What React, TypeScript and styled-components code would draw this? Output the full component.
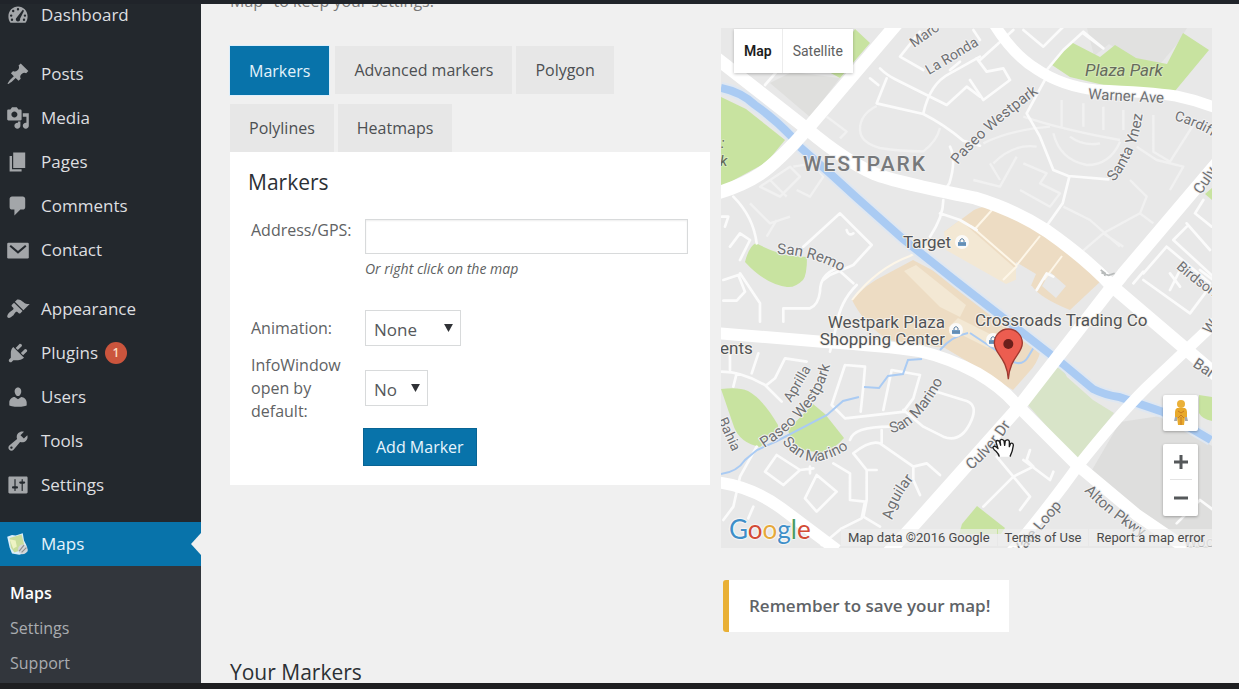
import React from "react";
import styled, { createGlobalStyle } from "styled-components";

const GlobalStyle = createGlobalStyle`
  *, *::before, *::after { box-sizing: border-box; }
  body {
    margin: 0;
    background: #f0f0f0;
    color: #444;
    font-family: "Open Sans", "Noto Sans", sans-serif;
    font-size: 16px;
  }
  button, input, select { font: inherit; color: inherit; margin: 0; }
`;

/* ---------- page frame ---------- */

const Shell = styled.div`
  display: grid;
  grid-template-rows: 4px minmax(0, 1fr) 6px;
  height: 100vh;
  overflow: hidden;
`;

const TopEdge = styled.div`
  background: #20242a;
`;

const BottomEdge = styled.div`
  background: #1e1f21;
`;

const Body = styled.div`
  display: grid;
  grid-template-columns: 201px minmax(0, 1fr);
  min-height: 0;
`;

/* ---------- sidebar ---------- */

const Sidebar = styled.nav`
  display: flex;
  flex-direction: column;
  background: #23282d;
  overflow: hidden;
`;

const MenuGroup = styled.ul`
  list-style: none;
  margin: 0 0 15px;
  padding: 0;
  &:first-child { margin-top: -11px; }
  &:nth-last-child(2) { margin-bottom: 0; }
`;

const MenuLink = styled.a<{ $current?: boolean }>`
  position: relative;
  display: flex;
  align-items: center;
  gap: 11px;
  height: 44px;
  padding-left: 6px;
  font-size: 17px;
  font-weight: 500;
  line-height: 24px;
  text-decoration: none;
  color: ${(p) => (p.$current ? "#e6f4fc" : "#dedfe0")};
  background: ${(p) => (p.$current ? "#0873aa" : "transparent")};
  &::after {
    content: ${(p) => (p.$current ? '""' : "none")};
    position: absolute;
    right: 0;
    top: 11px;
    border: 11px solid transparent;
    border-left-width: 0;
    border-right: 10px solid #f0f0f0;
  }
`;

const MenuIcon = styled.svg`
  flex: none;
  width: 24px;
  height: 24px;
  fill: #a3a6a9;
`;

const Count = styled.span`
  display: grid;
  place-items: center;
  width: 22px;
  height: 22px;
  margin-left: -4px;
  border-radius: 50%;
  background: #cb553d;
  color: #fbdcc0;
  font-size: 12px;
  font-weight: 600;
  line-height: 16px;
`;

const SubMenu = styled.ul`
  flex: 1;
  list-style: none;
  margin: 0;
  padding: 9px 0 0;
  background: #32363c;
`;

const SubLink = styled.a<{ $current?: boolean }>`
  display: flex;
  align-items: center;
  height: 35px;
  padding-left: 10px;
  font-size: 16px;
  font-weight: ${(p) => (p.$current ? 600 : 400)};
  text-decoration: none;
  color: ${(p) => (p.$current ? "#fff" : "#a9acb0")};
`;

/* ---------- main area ---------- */

const Main = styled.main`
  min-width: 0;
  padding: 0 27px 0 29px;
  overflow: hidden;
`;

const Columns = styled.div`
  display: grid;
  grid-template-columns: 480fr 491fr;
  column-gap: 11px;
  align-items: start;
`;

const Editor = styled.section`
  min-width: 0;
`;

const Note = styled.p`
  margin: -13px 0 35px;
  font-size: 16px;
  line-height: 20px;
  color: #777;
`;

const Tabs = styled.div`
  display: flex;
  flex-wrap: wrap;
  gap: 9px 4px;
`;

const Tab = styled.button<{ $active?: boolean }>`
  height: ${(p) => (p.$active ? "49px" : "48px")};
  margin-right: ${(p) => (p.$active ? "2px" : "0")};
  padding: 0 19px;
  border: 0;
  font-size: 16px;
  white-space: nowrap;
  font-weight: ${(p) => (p.$active ? 500 : 400)};
  color: ${(p) => (p.$active ? "#e3f2fb" : "#4c4f52")};
  background: ${(p) => (p.$active ? "#0873aa" : "#e7e7e7")};
  box-shadow: ${(p) => (p.$active ? "0 0 0 1px #dceffc" : "none")};
`;

const Panel = styled.div`
  padding: 14px 22px 19px 18px;
  background: #fff;
`;

const PanelTitle = styled.h2`
  margin: 0 0 21px;
  font-size: 21px;
  font-weight: 400;
  line-height: 32px;
  color: #2c3035;
`;

const Form = styled.form`
  display: grid;
  grid-template-columns: 112px minmax(0, 1fr);
  padding-left: 3px;
`;

const FieldLabel = styled.label<{ $inset?: number }>`
  grid-column: 1;
  padding-top: ${(p) => p.$inset ?? 0}px;
  padding-right: 14px;
  font-size: 16px;
  line-height: 23px;
  color: #606264;
`;

const FieldCell = styled.div<{ $height: number; $inset?: number }>`
  grid-column: 2;
  min-height: ${(p) => p.$height}px;
  padding-top: ${(p) => p.$inset ?? 0}px;
  padding-left: 2px;
`;

const ButtonRow = styled.div`
  grid-column: 2;
`;

const TextInput = styled.input`
  display: block;
  width: 100%;
  height: 35px;
  padding: 0 8px;
  border: 1px solid #d8dadb;
  background: #fff;
  box-shadow: inset 0 1px 2px rgba(0, 0, 0, 0.07);
`;

const Hint = styled.p`
  margin: 4px 0 0;
  font-size: 14px;
  font-style: italic;
  line-height: 21px;
  color: #5d5f61;
`;

const SelectBox = styled.span<{ $width: number }>`
  position: relative;
  display: block;
  width: ${(p) => p.$width}px;
  svg {
    position: absolute;
    right: 8px;
    top: 14px;
    width: 9px;
    height: 8px;
    fill: #303236;
    pointer-events: none;
  }
`;

const Select = styled.select`
  appearance: none;
  display: block;
  width: 100%;
  height: 36px;
  padding: 2px 8px 0;
  border: 1px solid #d8dadb;
  border-radius: 0;
  background: #fff;
  font-size: 17px;
  color: #55585b;
`;

const PrimaryButton = styled.button`
  height: 38px;
  padding: 0 12px;
  border: 1px solid #086494;
  background: #0873aa;
  color: #e8f5fd;
  font-size: 16px;
  font-weight: 500;
  white-space: nowrap;
`;

const SectionTitle = styled.h2`
  margin: 24px 0 0;
  font-size: 21px;
  font-weight: 400;
  line-height: 32px;
  color: #2c3035;
`;

/* ---------- map ---------- */

const MapColumn = styled.section`
  min-width: 0;
  padding-top: 24px;
`;

const MapFrame = styled.div`
  position: relative;
  aspect-ratio: 491 / 520;
  overflow: hidden;
  background: #e8e8e8;
  font-family: Roboto, sans-serif;
`;

const MapCanvas = styled.svg`
  display: block;
  width: 100%;
  height: 100%;
`;

const MapTypes = styled.div`
  position: absolute;
  top: 1px;
  left: 13px;
  display: flex;
  height: 44px;
  background: #fff;
  box-shadow: 0 1px 3px rgba(0, 0, 0, 0.25);
`;

const MapType = styled.button<{ $active?: boolean }>`
  padding: 0 10px;
  border: 0;
  background: #fff;
  font-size: 14px;
  line-height: 20px;
  font-weight: ${(p) => (p.$active ? 600 : 400)};
  color: ${(p) => (p.$active ? "#1c1c1c" : "#606060")};
  & + & { border-left: 1px solid #ececec; }
`;

const MapTools = styled.div`
  position: absolute;
  right: 14px;
  bottom: 32px;
  display: flex;
  flex-direction: column;
  gap: 13px;
  width: 35px;
`;

const ToolCard = styled.div`
  display: flex;
  flex-direction: column;
  align-items: center;
  background: #fff;
  border-radius: 2px;
  box-shadow: 0 1px 3px rgba(0, 0, 0, 0.3);
`;

const ToolButton = styled.button`
  display: grid;
  place-items: center;
  width: 100%;
  height: 36px;
  padding: 0;
  border: 0;
  background: transparent;
`;

const ToolRule = styled.hr`
  width: 22px;
  height: 1px;
  margin: -1px 0 0;
  border: 0;
  background: #e3e3e3;
`;

const Logo = styled.span`
  position: absolute;
  left: 8px;
  bottom: 1px;
  font-family: Lato, sans-serif;
  font-size: 26px;
  line-height: 36px;
  text-shadow: 0 0 2px #fff, 0 0 2px #fff, 0 0 2px #fff;
`;

const LogoLetter = styled.span<{ $tone: string }>`
  color: ${(p) => p.$tone};
`;

const Attribution = styled.div`
  position: absolute;
  right: 0;
  bottom: 2px;
  display: flex;
  gap: 1px;
`;

const Credit = styled.span`
  padding: 0 7px;
  background: rgba(240, 240, 240, 0.65);
  font-size: 13px;
  line-height: 17px;
  white-space: nowrap;
  color: #4a4a4a;
  a { color: inherit; text-decoration: none; }
`;

const Notice = styled.p`
  width: fit-content;
  margin: 32px 0 0 2px;
  padding: 14px 19px 14px 20px;
  border-left: 6px solid #e9b035;
  border-radius: 3px 0 0 3px;
  background: #fff;
  font-size: 17px;
  font-weight: 600;
  line-height: 24px;
  color: #606367;
`;

/* ---------- menu data ---------- */

const ICONS: Record<string, React.ReactNode> = {
  dashboard: (
    <path
      fillRule="evenodd"
      d="M3.76 16.5h12.48C17.34 15.13 18 13.2 18 11.2c0-4.6-3.58-8.2-8-8.2s-8 3.6-8 8.2c0 2 .66 3.93 1.76 5.3zM10 4.2a1 1 0 1 1 0 2 1 1 0 0 1 0-2zM6 5.7a1 1 0 1 1 0 2 1 1 0 0 1 0-2zM14 5.7l1 .8-3.3 6.7c.4 1.2-.5 2.3-1.7 2.3-1.3 0-2.2-1.3-1.7-2.5zM4.3 9.5a1 1 0 1 1 0 2 1 1 0 0 1 0-2zM15.800 9.5a1 1 0 1 1 0 2 1 1 0 0 1 0-2zM5 13a1 1 0 1 1 0 2 1 1 0 0 1 0-2zM15 13a1 1 0 1 1 0 2 1 1 0 0 1 0-2z"
    />
  ),
  posts: (
    <path d="M10.44 3.02l1.82-1.82 6.36 6.35-1.83 1.82c-1.05-.68-2.48-.57-3.41.36l-.75.75c-.92.93-1.04 2.35-.35 3.41l-1.83 1.82-2.41-2.41-2.8 2.79c-.42.42-3.38 2.71-3.8 2.29s1.86-3.39 2.28-3.81l2.79-2.79L4.1 9.36l1.83-1.82c1.05.69 2.48.57 3.4-.36l.75-.75c.93-.92 1.05-2.35.36-3.41z" />
  ),
  media: (
    <path d="M13 11V4c0-.55-.45-1-1-1h-1.67L9 1H5L3.67 3H2c-.55 0-1 .45-1 1v7c0 .55.45 1 1 1h10c.55 0 1-.45 1-1zM7 4.5c1.38 0 2.5 1.12 2.5 2.5S8.38 9.5 7 9.5 4.5 8.38 4.5 7 5.62 4.5 7 4.5zM14 6h5v10.5c0 1.38-1.12 2.5-2.5 2.5S14 17.88 14 16.5s1.12-2.5 2.5-2.5c.17 0 .34.02.5.05V9h-3V6zm-4 8.05V13h2v3.5c0 1.38-1.12 2.5-2.5 2.5S7 17.88 7 16.5 8.12 14 9.5 14c.17 0 .34.02.5.05z" />
  ),
  pages: <path d="M6 15V2h10v13H6zm-1 1h8v2H3V5h2v11z" />,
  comments: (
    <path d="M5 2h9c1.1 0 2 .9 2 2v7c0 1.1-.9 2-2 2h-2l-5 5v-5H5c-1.1 0-2-.9-2-2V4c0-1.1.9-2 2-2z" />
  ),
  contact: (
    <>
      <rect x="1" y="4" width="18" height="13" rx="1" />
      <path d="M3.5 6.500l6.500 5.500 6.500-5.500" fill="none" stroke="#23282d" strokeWidth="1.700" />
    </>
  ),
  appearance: (
    <path d="M14.48 11.06L7.41 3.99l1.5-1.5c.5-.56 2.3-.47 3.51.32 1.21.8 1.43 1.28 2.91 2.1 1.18.64 2.45 1.26 4.45.85zm-.71.71L6.7 4.7 4.93 6.47c-.39.39-.39 1.02 0 1.41l1.06 1.06c.39.39.39 1.03 0 1.42-.6.6-1.43 1.11-2.21 1.69-.35.26-.7.53-1.01.84C1.43 14.23.4 16.08 1.4 17.07c.99 1 2.84-.03 4.18-1.36.31-.31.58-.66.85-1.02.57-.78 1.08-1.61 1.69-2.21.39-.39 1.02-.39 1.41 0l1.06 1.06c.39.39 1.02.39 1.41 0z" />
  ),
  plugins: (
    <path d="M13.11 4.36L9.87 7.6 8 5.73l3.24-3.24c.35-.34 1.05-.2 1.56.32.52.51.66 1.21.31 1.55zm-8 1.77l.91-1.12 9.01 9.01-1.19.84c-.71.71-2.63 1.16-3.82 1.16H6.14L4.9 17.26c-.59.59-1.54.59-2.12 0-.59-.58-.59-1.53 0-2.12l1.24-1.24v-3.88c0-1.13.4-3.19 1.09-3.89zm7.26 3.97l3.24-3.24c.34-.35 1.04-.21 1.55.31.52.51.66 1.21.31 1.55l-3.24 3.25z" />
  ),
  users: (
    <path d="M10 9.25c-2.27 0-2.73-3.44-2.73-3.44C7 4.02 7.82 2 9.97 2c2.16 0 2.98 2.02 2.71 3.81 0 0-.41 3.44-2.68 3.44zm0 2.57L12.72 10c2.39 0 4.52 2.33 4.52 4.53v2.49s-3.65 1.13-7.24 1.13c-3.65 0-7.24-1.13-7.24-1.13v-2.49c0-2.25 1.94-4.48 4.47-4.48z" />
  ),
  tools: (
    <path d="M16.68 9.77c-1.34 1.34-3.3 1.67-4.95.99l-5.41 6.52c-.99.99-2.59.99-3.58 0s-.99-2.59 0-3.57l6.52-5.42c-.68-1.65-.35-3.61.99-4.95 1.28-1.28 3.12-1.62 4.72-1.06l-2.89 2.89 2.82 2.82 2.86-2.87c.53 1.58.18 3.39-1.08 4.65zM3.81 16.21c.4.39 1.04.39 1.43 0 .4-.4.4-1.04 0-1.43-.39-.4-1.03-.4-1.43 0-.39.39-.39 1.03 0 1.43z" />
  ),
  settings: (
    <path d="M18 16V4c0-.55-.45-1-1-1H3c-.55 0-1 .45-1 1v12c0 .55.45 1 1 1h14c.55 0 1-.45 1-1zM8 11h1c.55 0 1 .45 1 1s-.45 1-1 1H8v1.5c0 .28-.22.5-.5.5s-.5-.22-.5-.5V13H6c-.55 0-1-.45-1-1s.45-1 1-1h1V5.5c0-.28.22-.5.5-.5s.5.22.5.5V11zm5-2h-1c-.55 0-1-.45-1-1s.45-1 1-1h1V5.5c0-.28.22-.5.5-.5s.5.22.5.5V7h1c.55 0 1 .45 1 1s-.45 1-1 1h-1v5.5c0 .28-.22.5-.5.5s-.5-.22-.5-.5V9z" />
  ),
  maps: (
    <>
      <path d="M1 4l4-1.5 3 .5 6-2 1 6 2 4 1 5-3 2-4 1-6-1-2-5z" fill="#dbeefb" />
      <path d="M3 5l10-3 3 12-9 3-3-4z" fill="#c9dd9c" />
      <path d="M3 6l5 1 1 5-3 2z" fill="#eef3c4" />
      <circle cx="14" cy="14.5" r="4" fill="#d3d6d9" />
      <path d="M11 16l4-5M13 17l4-4" stroke="#91908c" fill="none" />
    </>
  ),
};

type Item = { label: string; icon: string; count?: number; current?: boolean };

const MENU: Item[][] = [
  [{ label: "Dashboard", icon: "dashboard" }],
  [
    { label: "Posts", icon: "posts" },
    { label: "Media", icon: "media" },
    { label: "Pages", icon: "pages" },
    { label: "Comments", icon: "comments" },
    { label: "Contact", icon: "contact" },
  ],
  [
    { label: "Appearance", icon: "appearance" },
    { label: "Plugins", icon: "plugins", count: 1 },
    { label: "Users", icon: "users" },
    { label: "Tools", icon: "tools" },
    { label: "Settings", icon: "settings" },
  ],
  [{ label: "Maps", icon: "maps", current: true }],
];

function AdminMenu() {
  return (
    <Sidebar aria-label="Main menu">
      {MENU.map((group) => (
        <MenuGroup key={group[0].label}>
          {group.map((item) => (
            <li key={item.label}>
              <MenuLink href="#" $current={item.current}>
                <MenuIcon viewBox="0 0 20 20" aria-hidden="true">
                  {ICONS[item.icon]}
                </MenuIcon>
                {item.label}
                {item.count && <Count>{item.count}</Count>}
              </MenuLink>
            </li>
          ))}
        </MenuGroup>
      ))}
      <SubMenu>
        <li><SubLink href="#" $current>Maps</SubLink></li>
        <li><SubLink href="#">Settings</SubLink></li>
        <li><SubLink href="#">Support</SubLink></li>
      </SubMenu>
    </Sidebar>
  );
}

function Dropdown({ id, width, options }: { id: string; width: number; options: string[] }) {
  return (
    <SelectBox $width={width}>
      <Select id={id}>
        {options.map((o) => <option key={o}>{o}</option>)}
      </Select>
      <svg viewBox="0 0 10 9" aria-hidden="true"><path d="M0 0h10L5 9z" /></svg>
    </SelectBox>
  );
}

const STREET_NAMES: [string, string, number][] = [
  ["lb-marc", "Marc", 14],
  ["lb-ronda", "La Ronda", 14],
  ["lb-remo", "San Remo", 15],
  ["lb-cardiff", "Cardiff", 14],
  ["lb-culver-n", "Culv", 15],
  ["lb-birdson", "Birdson", 14],
  ["lb-bar", "Bar", 15],
  ["lb-w", "W", 15],
  ["lb-aprilla", "Aprilla", 14],
  ["lb-paseo-n", "Paseo Westpark", 15],
  ["lb-paseo-s", "Paseo Westpark", 15],
  ["lb-ynez", "Santa Ynez", 15],
  ["lb-marino-w", "San Marino", 15],
  ["lb-marino-e", "San Marino", 15],
  ["lb-bahia", "Bahia", 14],
  ["lb-aguilar", "Aguilar", 15],
  ["lb-culver-s", "Culver Dr", 15],
  ["lb-alton", "Alton Pkwy", 15],
  ["lb-yale", "Yale Loop", 15],
];

/* The street map is drawn at three units per pixel, in four quarters. */
function StreetMap() {
  return (
    <MapCanvas viewBox="2163 84 1473 1560" preserveAspectRatio="xMidYMid slice" role="img" aria-label="Street map">
      <rect x="2163" y="84" width="1473" height="1560" fill="#e8e8e8" />

      {/* land use */}
      <g transform="scale(3)">
        <path d="M792 72l48 6-30 39-40-34z" fill="#dfdfdd" />
        <path d="M1087 28h100l-10 16-16 19-31-6-21-13-15 12z" fill="#e1e1e0" />
        <path d="M1092 470l28-48 40-6 52 30v102h-36l-40-30z" fill="#dededd" />
        <g fill="#c8e3a0">
          <path d="M721 97l25 12 39 31-18 22-46 25z" />
          <path d="M855 29l15 14-30 35-13-7z" />
          <path d="M1052 65l19-23 29 15 15-12 21 13 31 6 16-31 26 17-34 41-63-4-42-10z" />
          <path d="M756 243q25 14 51 14 0 18-4 23-8 8-16 7-22-3-42-25 4-16 11-19z" />
          <path d="M721 389q18-2 27 2 15 8 30 34v6l-18 16q-20-4-26-20z" />
          <path d="M813 404l12 10 19 24q-10 12-22 14-15 0-23-4-8-6-11-18z" />
          <path d="M962 524l15-18 28 22-4 6h-42z" />
          <path d="M1199 395l13 2v24q-10-2-13-8z" />
          <path d="M1212 188v12l-7-6z" />
        </g>
        <path d="M1060 363l7 14 26 23 21 13-37 48-49-56z" fill="#d8e4c8" />
        <g fill="#eddcc3">
          <path d="M852 300q14-16 33-25l28-15 36 19 70 57 22 14q-4 14-12 22l-16 18q-24-14-38-24l-30-18-57-8q-24-16-36-40z" />
          <path d="M944 232l30-22q10-5 16-2 32 10 57 28l55 44-32 30q-30-12-38-24-24-10-36-16z" />
        </g>
        <g fill="#f3e8d4">
          <path d="M944 232l16-12 64 56-18 8-60-34z" />
          <path d="M904 271l12-6 50 40-6 12-20-10z" />
          <path d="M958 318l40 20-10 10-40-20z" />
        </g>
        <path d="M1016 262l20 12-6 14-14-6zM1050 272l16 14-10 12-14-12z" fill="#e8e8e8" />
        <g fill="none" stroke="#fdf6e8" strokeWidth="2">
          <path d="M971 226l46 40M992 210l-18 20M1040 236l-24 30M1062 256l-18 24M1017 266l-14 14M852 300q25-32 58-44l22-12" />
        </g>
      </g>

      {/* fainter side streets */}
      <g fill="none" stroke="#f1f1f1" strokeWidth="7" strokeLinejoin="round">
        <g transform="translate(2130 0)">
          <path d="M500 318q-50 25-50 70 0 40 60 56 60 10 130 10 40-30 50-70M350 350l60 45-20 20M150 560l90-60 30 30-60 60zM120 610l60 60 60-20M180 540l50 50M250 500l60-10 30 40-40 60-40-20M200 660l-30 50" />
        </g>
        <g transform="translate(2910 0)">
          <path d="M160 350q120 40 290 70M275 300v80M340 310v70M400 320v70M460 330v60M40 430q80-40 200-50M250 400q20 80 100 95 70 0 100-70M300 410q40 30 90 20M10 540l80 20 50-90M70 490q60-60 130-50M90 540l-30-50M150 570l90 50 30-40-60-30 20-30-70-30M550 345v110l50 30 70-110M500 440l60 40 80 20-40 70M480 540l50 50-20 50-110 60-70 60-20-20M280 620l80 40 90 80M400 700l60 40M510 640l40 30" />
        </g>
      </g>

      {/* side streets */}
      <g fill="none" stroke="#fbfbfb" strokeWidth="8" strokeLinejoin="round" strokeLinecap="round">
        <g transform="translate(2130 0)">
          <path d="M510 205q20 20 50 35l60 30 90 45 60-55 40 30M530 235l-30 75 140 32q60 30 120 80l50 15M640 340q20-90 80-120l90-50M720 440q20 40-2 110l-20 30M480 235l25 20M640 210l-70-40 60-75M200 215l-35 40M720 210l30-25M790 90l20 30" />
          <path d="M70 590q60 60 70 140M35 650l20 0-10 30M60 740l30-40 30 20-30 60M280 740l110-100 95 95-55 60-70 30-20 15M410 690q5 20 20 10M690 640l60 20 50 30M700 600q0 50-40 110" />
        </g>
        <g transform="translate(2910 0)">
          <path d="M30 180l100-90M160 90l60 50 60-60M340 100l60 45-60-50-60 55-50 60M0 240l40 60 80-60-20-35-50 10-30-40M230 230l-60 110 40 70 40 100 45 18 120 10M298 530l-20 80-50 70M700 600l-25 40 50 40M650 680l-40 40 120 110M650 670l70 80M590 740l130 110M590 740l-70 80" />
        </g>
        <g transform="translate(2130 810)">
          <path d="M40 30l45-15 20 50-25 27-40 0M90 10l60 90v55M220 155v-40h80q25-10 30-50 0-50 50-70l50 45M440 45q-50 50-60 120l-20 80M60 250v50M145 250l-20 60M35 305q60 0 130 40l50 50M290 275l-65-10-30 60-25 20M80 310l-10 40M405 285l60 5-5 60-8 75M405 285l-40 120 40 40 180-20M520 420l25-120 85 15-20 70-30 40M580 420l60 50 60 30q50 20 80-40 30-60-20-70l-80-25M540 470q-110 0-120 40M515 480v40M140 530l-50 90-20 90-30 40M200 555l70 45-50 45-55-40zM320 615l60 50-60 60-35-40zM270 600l40-5M370 580l50 30v80l45 5-10 50-60 30-60 50M300 590v20M430 550q50-40 80-30l100 70 40-10 40 35M430 550l40 50 30 0M470 600l0 90-10 50 50 30M610 590l0 40 20 45M130 710l-15 35" />
        </g>
        <g transform="translate(2910 810)">
          <path d="M40 710l90-90 50 60-30 40M130 620l-50-60M130 620l60-30M160 570l80 60 10-25M190 590l-20-20 10-30M630 50l-30-40M520 30l140 100 60-80M600 60l30-60M620 760l70-70 40 30M490 40l30-35M690 0l40 30M200 60l30-50 20 10" />
        </g>
      </g>

      {/* stream and canal */}
      <g transform="scale(3)" fill="none" stroke="#aacbf3">
        <path d="M721 474q16-2 24-14l12-10 20-9 50-26 16-14 16-4M864 387l15 1 9-12 15-2 5-14 14-1M940 350q12-14 28-17M970 333l30 20q20 18 28 4l6-10" strokeWidth="2" />
        <g strokeLinecap="butt">
          <path d="M721 88q20 4 34 17 20 14 38 33M800 147q30 26 57 51l46 41 54 43 106 82 30 25q12 6 26 8l44 15 48 28" stroke="#dfe7f1" strokeWidth="12" />
          <path d="M721 88q20 4 34 17 20 14 38 33M800 147q30 26 57 51l46 41 54 43 106 82 30 25q12 6 26 8l44 15 48 28" strokeWidth="8" />
        </g>
      </g>

      {/* arterial roads */}
      <g transform="scale(3)" fill="none" stroke="#fff" strokeWidth="13">
        <path d="M715 57l92 72q38 32 68 45 20 8 100 24 40 12 72 33 40 28 66 56l68 58 40 34" />
        <path d="M900 20l-92 108q-30 34-48 46-18 12-46 20" />
        <path d="M1218 162l-95 112q-4 6-12 14l-93 120-105 118-26 28" />
        <path d="M715 333l110 9q60 4 94 9 30 7 58 22 24 14 38 30l60 60 62 52 50 34" strokeWidth="12" />
        <path d="M1218 320l-72 68q-30 30-68 78-30 42-72 92" strokeWidth="11" />
        <path d="M994 24q20 32 44 46 24 16 58 20 54 2 80 6 20 4 40 12" strokeWidth="11" />
        <path d="M715 482q36 4 66 26l56 42" strokeWidth="12" />
      </g>
      <path d="M3302 810l14 10-2 8M3304 818l22 8 18-6" fill="none" stroke="#b8bbbb" strokeWidth="5" />

      {/* labels */}
      <defs>
        <path id="lb-marc" d="M914 48l34-24" />
        <path id="lb-ronda" d="M929 75l60-36" />
        <path id="lb-paseo-n" d="M958 165q26-34 100-86" />
        <path id="lb-remo" d="M777 254q36 0 72 22" />
        <path id="lb-ynez" d="M1114 182q28-34 30-84" />
        <path id="lb-cardiff" d="M1174 120q24 6 50 24" />
        <path id="lb-culver-n" d="M1201 195l24-36" />
        <path id="lb-birdson" d="M1176 268q20 18 48 36" />
        <path id="lb-bar" d="M1192 366l36 24" />
        <path id="lb-w" d="M1210 335l12-16" />
        <path id="lb-aprilla" d="M791 403l26-44" />
        <path id="lb-paseo-s" d="M764 448q70-46 68-106" />
        <path id="lb-marino-w" d="M782 442q22 26 44 17 24-6 46-34" />
        <path id="lb-marino-e" d="M891 433q30-4 60-68" />
        <path id="lb-bahia" d="M718 420l18 40" />
        <path id="lb-aguilar" d="M893 520q-2-16 36-60" />
        <path id="lb-culver-s" d="M971 470q26-20 50-62" />
        <path id="lb-alton" d="M1084 491q32 34 86 62" />
        <path id="lb-yale" d="M1020 556l62-74" />
      </defs>
      <g
        transform="scale(3)"
        fontFamily="Roboto, sans-serif"
        fontSize="13"
        fill="#6f7072"
        stroke="#f2f2f2"
        strokeWidth="2"
        strokeLinejoin="round"
        paintOrder="stroke"
      >
        {STREET_NAMES.map(([id, name, size]) => (
          <text key={id} fontSize={size}><textPath href={"#" + id}>{name}</textPath></text>
        ))}
        <text x="1088" y="99" transform="rotate(3 1088 99)" fontSize="15">Warner Ave</text>
        <text x="803" y="171" fontSize="21" letterSpacing="2" fontWeight="500" fill="#77797b" stroke="#eee">WESTPARK</text>
        <text x="1085" y="76" fontSize="17" fontStyle="italic" fill="#656b5c" stroke="#d6e9b8">Plaza Park</text>
        <text x="721" y="148" fontSize="15" fontStyle="italic" fill="#5f6658" stroke="#d6e9b8">:</text>
        <text x="720" y="166" fontSize="15" fontStyle="italic" fill="#5f6658" stroke="#d6e9b8">k</text>
        <g fontSize="17" fill="#505356" stroke="#f6f2ec">
          <text x="903" y="248">Target</text>
          <text x="945" y="328" textAnchor="end">Westpark Plaza</text>
          <text x="945" y="345" textAnchor="end">Shopping Center</text>
          <text x="975" y="326">Crossroads Trading Co</text>
          <text x="720" y="354">ents</text>
        </g>
        <text x="1184" y="547" fontSize="15" fill="#b4b4b4">Woo</text>
      </g>

      {/* shop badges */}
      <g transform="scale(3)">
        {[[962, 242], [956, 330], [993, 340]].map(([x, y]) => (
          <g key={x} transform={`translate(${x} ${y})`}>
            <circle r="7" fill="#fbfaf8" />
            <path d="M-4 0h8v4h-8z" fill="#6d9cc6" />
            <path d="M-2 0v-2q2-3 4 0v2M-4 2h8" fill="none" stroke="#5e7f9f" />
          </g>
        ))}
      </g>

      {/* pin */}
      <g transform="translate(3025 1138)">
        <path d="M0 0C-4-66-42-76-42-109a42 42 0 0 1 84 0C42-76 4-66 0 0z" fill="#ec5d50" stroke="#9f3930" strokeWidth="4" />
        <circle cy="-106" r="15" fill="#6b1f1b" />
      </g>

      {/* grabbing hand pointer */}
      <path
        transform="translate(2978 1314)"
        d="M20 56q-2-8-10-16-12-10-8-14 6-4 14 6l-6-20q2-8 10-2l4 12-2-14q4-8 12 0l2 14 2-14q8-6 12 2l0 16 4-10q8-2 8 6-2 18-10 34"
        fill="#fff"
        stroke="#1b1b1b"
        strokeWidth="4"
        strokeLinejoin="round"
      />
    </MapCanvas>
  );
}

function MapView() {
  const logo: [string, string][] = [
    ["G", "#3f8fc8"], ["o", "#d24b35"], ["o", "#e6a93a"],
    ["g", "#3f8fc8"], ["l", "#4c9c62"], ["e", "#d24b35"],
  ];
  return (
    <MapFrame>
      <StreetMap />
      <MapTypes>
        <MapType type="button" $active>Map</MapType>
        <MapType type="button">Satellite</MapType>
      </MapTypes>
      <MapTools>
        <ToolCard>
          <ToolButton type="button" aria-label="Street View">
            <svg width="16" height="28" viewBox="0 0 16 28">
              <path d="M2 18l-1 4h3l1-8M14 18l1 4h-3l-1-8" fill="#a7a9ab" />
              <circle cx="8" cy="5" r="4" fill="#eab038" />
              <path d="M4 9h8q2 1 2 4v5h-2l-1 8H5l-1-8H2v-5q0-3 2-4z" fill="#e8a92c" />
              <path d="M5 12l3 2 3-2M5 19l3-3 3 3M8 18v8" stroke="#c87a22" fill="none" />
            </svg>
          </ToolButton>
        </ToolCard>
        <ToolCard>
          <ToolButton type="button" aria-label="Zoom in">
            <svg width="14" height="14" viewBox="0 0 14 14"><path d="M7 0v14M0 7h14" stroke="#55585a" strokeWidth="3" /></svg>
          </ToolButton>
          <ToolRule />
          <ToolButton type="button" aria-label="Zoom out">
            <svg width="14" height="14" viewBox="0 0 14 14"><path d="M0 7h14" stroke="#55585a" strokeWidth="3" /></svg>
          </ToolButton>
        </ToolCard>
      </MapTools>
      <Logo>
        {logo.map(([c, tone], i) => <LogoLetter key={i} $tone={tone}>{c}</LogoLetter>)}
      </Logo>
      <Attribution>
        <Credit>Map data ©2016 Google</Credit>
        <Credit><a href="#">Terms of Use</a></Credit>
        <Credit><a href="#">Report a map error</a></Credit>
      </Attribution>
    </MapFrame>
  );
}

const TABS = ["Markers", "Advanced markers", "Polygon", "Polylines", "Heatmaps"];

export default function App() {
  return (
    <>
      <GlobalStyle />
      <Shell>
        <TopEdge />
        <Body>
          <AdminMenu />
          <Main>
            <Columns>
              <Editor>
                <Note>Map" to keep your settings.</Note>
                <Tabs role="tablist">
                  {TABS.map((t, i) => (
                    <Tab key={t} type="button" role="tab" aria-selected={i === 0} $active={i === 0}>{t}</Tab>
                  ))}
                </Tabs>
                <Panel>
                  <PanelTitle>Markers</PanelTitle>
                  <Form onSubmit={(e) => e.preventDefault()}>
                    <FieldLabel htmlFor="address">Address/GPS:</FieldLabel>
                    <FieldCell $height={91}>
                      <TextInput id="address" type="text" />
                      <Hint>Or right click on the map</Hint>
                    </FieldCell>
                    <FieldLabel htmlFor="animation" $inset={7}>Animation:</FieldLabel>
                    <FieldCell $height={43}>
                      <Dropdown id="animation" width={96} options={["None", "Bounce", "Drop"]} />
                    </FieldCell>
                    <FieldLabel htmlFor="infowindow" $inset={1}>InfoWindow open by default:</FieldLabel>
                    <FieldCell $height={75} $inset={17}>
                      <Dropdown id="infowindow" width={63} options={["No", "Yes"]} />
                    </FieldCell>
                    <ButtonRow><PrimaryButton type="submit">Add Marker</PrimaryButton></ButtonRow>
                  </Form>
                </Panel>
              </Editor>
              <MapColumn>
                <MapView />
                <Notice>Remember to save your map!</Notice>
              </MapColumn>
            </Columns>
            <SectionTitle>Your Markers</SectionTitle>
          </Main>
        </Body>
        <BottomEdge />
      </Shell>
    </>
  );
}
